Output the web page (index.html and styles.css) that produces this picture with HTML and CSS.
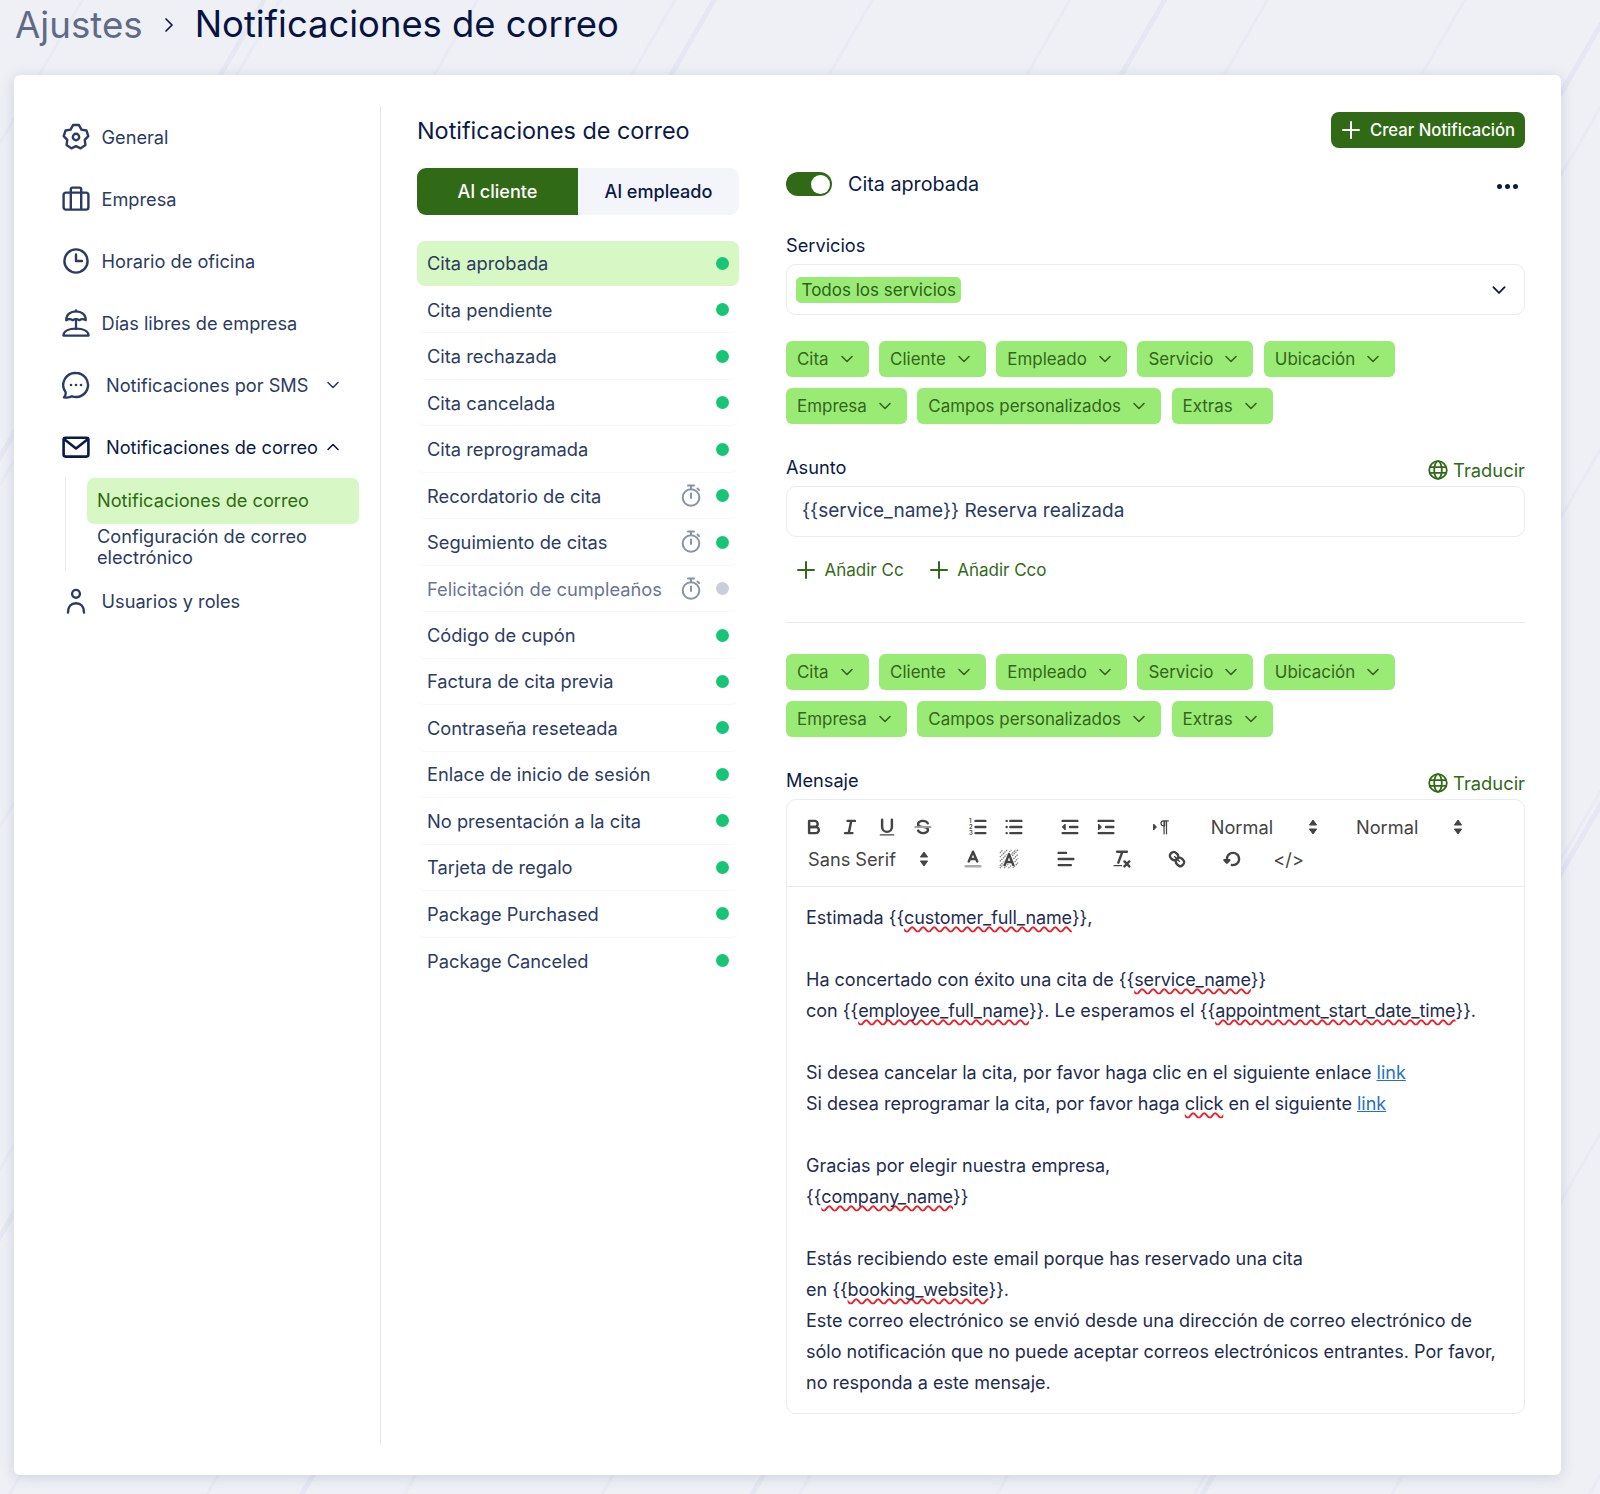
FILE: index.html
```html
<!DOCTYPE html>
<html lang="es">
<head>
<meta charset="utf-8">
<title>Notificaciones de correo</title>
<link rel="stylesheet" href="styles.css">
</head>
<body>
<svg class="defs" width="0" height="0" aria-hidden="true">
  <defs>
    <symbol id="chev" viewBox="0 0 16 16"><path d="M3 5.5l5 5 5-5" fill="none" stroke="currentColor" stroke-width="1.6" stroke-linecap="round" stroke-linejoin="round"/></symbol>
    <symbol id="plus" viewBox="0 0 18 18"><path d="M9 1v16M1 9h16" fill="none" stroke="currentColor" stroke-width="2" stroke-linecap="round"/></symbol>
    <symbol id="watch" viewBox="0 0 20 24"><g fill="none" stroke="currentColor" stroke-width="2" stroke-linecap="round"><circle cx="10" cy="13.5" r="8.3"/><path d="M10 9.5v4.5M7 1.5h6M10 1.5v3.5M16.5 4.5l1.6 1.6"/></g></symbol>
    <symbol id="globe" viewBox="0 0 20 20"><g fill="none" stroke="currentColor" stroke-width="1.8"><circle cx="10" cy="10" r="8.8"/><ellipse cx="10" cy="10" rx="3.8" ry="8.8"/><path d="M1.4 7.2h17.2M1.4 12.8h17.2"/></g></symbol>
    <symbol id="updown" viewBox="0 0 10 18"><path d="M5 2l3.6 5H1.400zM5 16l3.6-5H1.400z" fill="currentColor" stroke="currentColor" stroke-linejoin="round"/></symbol>
  </defs>
</svg>

<header class="crumbs">
  <span class="crumb-root">Ajustes</span>
  <svg class="crumb-sep" viewBox="0 0 10 16"><path d="M2 2l6 6-6 6" fill="none" stroke="currentColor" stroke-width="1.7" stroke-linecap="round" stroke-linejoin="round"/></svg>
  <h1 class="crumb-current">Notificaciones de correo</h1>
</header>

<main class="card">
  <nav class="side">
    <a class="nav-item">
      <svg class="nav-ico" viewBox="0 0 28 28"><g fill="none" stroke="currentColor" stroke-width="2.4" stroke-linejoin="round"><path d="M11.02 2.07L16.98 2.07L19.41 6.56L24.43 7.48L26.27 13.14L22.75 16.84L23.42 21.91L18.61 25.4L14 23.2L9.39 25.4L4.58 21.91L5.25 16.84L1.73 13.14L3.57 7.48L8.59 6.56Z"/><circle cx="14" cy="14" r="3.2"/></g></svg>
      <span>General</span>
    </a>
    <a class="nav-item">
      <svg class="nav-ico" viewBox="0 0 28 28"><g fill="none" stroke="currentColor" stroke-width="2.4" stroke-linejoin="round"><rect x="1.6" y="7.6" width="24.8" height="17" rx="2.4"/><path d="M8.8 7.6v17M19.2 7.6v17M8.8 7.6V4.2a1.6 1.6 0 0 1 1.6-1.6h7.2a1.6 1.6 0 0 1 1.6 1.6v3.4"/></g></svg>
      <span>Empresa</span>
    </a>
    <a class="nav-item">
      <svg class="nav-ico" viewBox="0 0 28 28"><g fill="none" stroke="currentColor" stroke-width="2.4" stroke-linecap="round" stroke-linejoin="round"><circle cx="14" cy="14" r="11.6"/><path d="M14 7.4V14h6"/></g></svg>
      <span>Horario de oficina</span>
    </a>
    <a class="nav-item">
      <svg class="nav-ico" viewBox="0 0 30 30"><g fill="none" stroke="currentColor" stroke-width="2.4" stroke-linecap="round" stroke-linejoin="round"><path d="M4.5 12c0-6 4.500-9.500 10.500-9.500S25.500 6 25.500 12c-2.300-1.500-4.700-1.500-7 0-2.300-1.500-4.700-1.500-7 0-2.300-1.500-4.700-1.500-7 0z"/><path d="M15 1.500v1M15 11.500v10"/><path d="M1.500 28.500c0-4.800 5.500-7.500 13.500-7.500s13.500 2.700 13.500 7.500z"/></g></svg>
      <span>Días libres de empresa</span>
    </a>
    <a class="nav-item nav-sub">
      <svg class="nav-ico" viewBox="0 0 28 28"><path d="M14 2a12 12 0 1 1-4 23.300C7.800 26.500 4.500 26.800 2 26.300c1.300-1.200 2-2.800 1.600-5.200A12 12 0 0 1 14 2z" fill="none" stroke="currentColor" stroke-width="2.4" stroke-linejoin="round"/><circle cx="9" cy="14" r="1.300" fill="currentColor"/><circle cx="14" cy="14" r="1.300" fill="currentColor"/><circle cx="19" cy="14" r="1.300" fill="currentColor"/></svg>
      <span class="nav-label">Notificaciones por SMS</span>
      <svg class="nav-chev"><use href="#chev"/></svg>
    </a>
    <a class="nav-item nav-sub nav-open">
      <svg class="nav-ico" viewBox="0 0 28 28"><g fill="none" stroke="currentColor" stroke-width="2.6" stroke-linejoin="round"><rect x="1.600" y="4.800" width="24.800" height="18.800" rx="2"/><path d="M2 6l12 9.500L26 6"/></g></svg>
      <span class="nav-label">Notificaciones de correo</span>
      <svg class="nav-chev nav-chev-up"><use href="#chev"/></svg>
    </a>
    <div class="subnav">
      <a class="sub-item sub-active">Notificaciones de correo</a>
      <a class="sub-item">Configuración de correo electrónico</a>
    </div>
    <a class="nav-item nav-last">
      <svg class="nav-ico" viewBox="0 0 28 28"><g fill="none" stroke="currentColor" stroke-width="2.4" stroke-linecap="round"><circle cx="14" cy="6.800" r="3.900"/><path d="M6 25.500c0-6 3.200-9.200 8-9.200s8 3.200 8 9.200"/></g></svg>
      <span>Usuarios y roles</span>
    </a>
  </nav>

  <section class="body">
    <div class="list-col">
      <h2 class="col-title">Notificaciones de correo</h2>
      <div class="tabs">
        <button class="tab tab-on">Al cliente</button>
        <button class="tab">Al empleado</button>
      </div>
      <ul class="list">
        <li class="row row-on"><span class="row-name">Cita aprobada</span><i class="dot"></i></li>
        <li class="row"><span class="row-name">Cita pendiente</span><i class="dot"></i></li>
        <li class="row"><span class="row-name">Cita rechazada</span><i class="dot"></i></li>
        <li class="row"><span class="row-name">Cita cancelada</span><i class="dot"></i></li>
        <li class="row"><span class="row-name">Cita reprogramada</span><i class="dot"></i></li>
        <li class="row"><span class="row-name">Recordatorio de cita</span><svg class="watch"><use href="#watch"/></svg><i class="dot"></i></li>
        <li class="row"><span class="row-name">Seguimiento de citas</span><svg class="watch"><use href="#watch"/></svg><i class="dot"></i></li>
        <li class="row row-off"><span class="row-name">Felicitación de cumpleaños</span><svg class="watch"><use href="#watch"/></svg><i class="dot dot-off"></i></li>
        <li class="row"><span class="row-name">Código de cupón</span><i class="dot"></i></li>
        <li class="row"><span class="row-name">Factura de cita previa</span><i class="dot"></i></li>
        <li class="row"><span class="row-name">Contraseña reseteada</span><i class="dot"></i></li>
        <li class="row"><span class="row-name">Enlace de inicio de sesión</span><i class="dot"></i></li>
        <li class="row"><span class="row-name">No presentación a la cita</span><i class="dot"></i></li>
        <li class="row"><span class="row-name">Tarjeta de regalo</span><i class="dot"></i></li>
        <li class="row"><span class="row-name">Package Purchased</span><i class="dot"></i></li>
        <li class="row row-end"><span class="row-name">Package Canceled</span><i class="dot"></i></li>
      </ul>
    </div>

    <div class="detail">
      <div class="detail-top">
        <button class="create"><svg class="create-plus"><use href="#plus"/></svg>Crear Notificación</button>
      </div>
      <div class="status">
        <span class="switch"><i class="knob"></i></span>
        <span class="status-name">Cita aprobada</span>
        <span class="more"><i></i><i></i><i></i></span>
      </div>

      <label class="field-label label-serv">Servicios</label>
      <div class="box select">
        <span class="tag">Todos los servicios</span>
        <svg class="select-chev"><use href="#chev"/></svg>
      </div>

      <div class="chips">
        <div class="chip-line">
          <span class="chip">Cita<svg><use href="#chev"/></svg></span>
          <span class="chip">Cliente<svg><use href="#chev"/></svg></span>
          <span class="chip">Empleado<svg><use href="#chev"/></svg></span>
          <span class="chip">Servicio<svg><use href="#chev"/></svg></span>
          <span class="chip">Ubicación<svg><use href="#chev"/></svg></span>
        </div>
        <div class="chip-line">
          <span class="chip">Empresa<svg><use href="#chev"/></svg></span>
          <span class="chip">Campos personalizados<svg><use href="#chev"/></svg></span>
          <span class="chip">Extras<svg><use href="#chev"/></svg></span>
        </div>
      </div>

      <div class="label-row label-asunto">
        <label class="field-label">Asunto</label>
        <a class="translate"><svg><use href="#globe"/></svg>Traducir</a>
      </div>
      <div class="box subject">{{service_name}} Reserva realizada</div>

      <div class="adds">
        <a class="add"><svg><use href="#plus"/></svg>Añadir Cc</a>
        <a class="add"><svg><use href="#plus"/></svg>Añadir Cco</a>
      </div>
      <hr class="rule">

      <div class="chips">
        <div class="chip-line">
          <span class="chip">Cita<svg><use href="#chev"/></svg></span>
          <span class="chip">Cliente<svg><use href="#chev"/></svg></span>
          <span class="chip">Empleado<svg><use href="#chev"/></svg></span>
          <span class="chip">Servicio<svg><use href="#chev"/></svg></span>
          <span class="chip">Ubicación<svg><use href="#chev"/></svg></span>
        </div>
        <div class="chip-line">
          <span class="chip">Empresa<svg><use href="#chev"/></svg></span>
          <span class="chip">Campos personalizados<svg><use href="#chev"/></svg></span>
          <span class="chip">Extras<svg><use href="#chev"/></svg></span>
        </div>
      </div>

      <div class="label-row label-msg">
        <label class="field-label">Mensaje</label>
        <a class="translate"><svg><use href="#globe"/></svg>Traducir</a>
      </div>
      <div class="editor">
        <div class="toolbar">
          <div class="tgroup">
            <button class="tb"><svg viewBox="0 0 18 18"><path class="s" d="M5,4H9.5A2.5,2.5,0,0,1,12,6.5v0A2.5,2.5,0,0,1,9.5,9H5V4Z"/><path class="s" d="M5,9h5.5A2.5,2.5,0,0,1,13,11.5v0A2.5,2.5,0,0,1,10.5,14H5V9Z"/></svg></button>
            <button class="tb"><svg viewBox="0 0 18 18"><path class="s" d="M7 4h6M5 14h6M8 14l2-10"/></svg></button>
            <button class="tb"><svg viewBox="0 0 18 18"><path class="s" d="M5,3V9a4,4,0,0,0,4,4h0a4,4,0,0,0,4-4V3"/><rect class="f" height="1" rx=".5" width="12" x="3" y="15"/></svg></button>
            <button class="tb"><svg viewBox="0 0 18 18"><path class="s t" d="M15.5,9H2.5"/><path class="f" d="M9.007,8C6.542,7.791,6,7.519,6,6.5,6,5.792,7.283,5,9,5c1.571,0,2.765.679,2.969,1.309a1,1,0,0,0,1.9-.617C13.356,4.106,11.354,3,9,3,6.2,3,4,4.538,4,6.5a3.2,3.2,0,0,0,.5,1.843Z"/><path class="f" d="M8.984,10C11.457,10.208,12,10.479,12,11.5c0,.708-1.283,1.5-3,1.5-1.571,0-2.765-.679-2.969-1.309a1,1,0,1,0-1.9.617C4.644,13.894,6.646,15,9,15c2.8,0,5-1.538,5-3.5a3.2,3.2,0,0,0-.5-1.843Z"/></svg></button>
          </div>
          <div class="tgroup">
            <button class="tb"><svg viewBox="0 0 18 18"><path class="s" d="M7 4h8M7 9h8M7 14h8"/><text class="num" x="1.7" y="5.700">1</text><text class="num" x="1.7" y="10.700">2</text><text class="num" x="1.7" y="15.700">3</text></svg></button>
            <button class="tb"><svg viewBox="0 0 18 18"><path class="s" d="M6 4h9M6 9h9M6 14h9M3 4h0M3 9h0M3 14h0"/></svg></button>
          </div>
          <div class="tgroup">
            <button class="tb"><svg viewBox="0 0 18 18"><path class="s" d="M3 14h12M3 4h12M9 9h6"/><path class="f s t" d="M5 7v4L3 9z"/></svg></button>
            <button class="tb"><svg viewBox="0 0 18 18"><path class="s" d="M3 14h12M3 4h12M9 9h6"/><path class="f s t" d="M3 7v4l2-2z"/></svg></button>
          </div>
          <div class="tgroup">
            <button class="tb"><svg viewBox="0 0 18 18"><path class="f s t" d="M3 11l2-2-2-2z"/><path class="s t" d="M15 4h-4a2 2 0 0 0 0 4h1V4"/><rect class="f" height="11" width="1" x="11" y="4"/><rect class="f" height="11" width="1" x="13" y="4"/></svg></button>
          </div>
          <div class="picker"><span>Normal</span><svg><use href="#updown"/></svg></div>
          <div class="picker"><span>Normal</span><svg><use href="#updown"/></svg></div>
          <div class="picker picker-font"><span>Sans Serif</span><svg><use href="#updown"/></svg></div>
          <div class="tgroup">
            <button class="tb"><svg viewBox="0 0 18 18"><path class="s" stroke-opacity=".45" d="M3 15h12"/><path class="s" d="M5.500 11L9 3l3.500 8M11.630 9H6.380"/></svg></button>
            <button class="tb"><svg viewBox="0 0 18 18"><path class="hatch" d="M1.500 4L4 1.500M1.500 7.500L7.500 1.500M1.500 11L11 1.500M1.500 14.500L14.500 1.500M1.500 16.500L16.500 1.500M5 16.500L16.500 5M8.500 16.500L16.500 8.500M12 16.500L16.500 12"/><path class="halo" d="M5.500 14L9 5l3.500 9M11.630 11.500H6.380"/><path class="s" d="M5.500 14L9 5l3.500 9M11.630 11.500H6.380"/></svg></button>
          </div>
          <div class="tgroup tg-nudge">
            <button class="tb"><svg viewBox="0 0 18 18"><path class="s" d="M3 9h12M3 14h10M3 4h6"/></svg></button>
          </div>
          <div class="tgroup tg-nudge">
            <button class="tb"><svg viewBox="0 0 18 18"><path class="s" d="M5 3h8M6 12l3.350-9M11 11l4 4M15 11l-4 4"/><rect class="f" height="1" rx=".5" width="7" x="2" y="14"/></svg></button>
          </div>
          <div class="tgroup">
            <button class="tb"><svg viewBox="0 0 18 18"><path class="s t" d="M7 7l4 4"/><path class="s" d="M8.9,4.577a3.476,3.476,0,0,1,.36,4.679A3.476,3.476,0,0,1,4.577,8.9C3.185,7.5,2.035,6.4,4.217,4.217S7.5,3.185,8.9,4.577Z"/><path class="s" d="M13.423,9.1a3.476,3.476,0,0,0-4.679-.36,3.476,3.476,0,0,0,.36,4.679c1.392,1.392,2.5,2.542,4.679.36S14.815,10.5,13.423,9.1Z"/></svg></button>
          </div>
          <div class="tgroup tg-nudge">
            <button class="tb"><svg viewBox="0 0 18 18"><path class="f s" d="M6 10l-2 2-2-2z"/><path class="s" d="M8.09,13.91A4.6,4.6,0,0,0,9,14,5,5,0,1,0,4,9"/></svg></button>
          </div>
          <div class="tgroup">
            <button class="tb tb-code">&lt;/&gt;</button>
          </div>
        </div>
        <div class="content">
          <p>Estimada {{<span class="sp">customer_full_name</span>}},</p>
          <p class="gap"></p>
          <p>Ha concertado con éxito una cita de {{<span class="sp">service_name</span>}}</p>
          <p>con {{<span class="sp">employee_full_name</span>}}. Le esperamos el {{<span class="sp">appointment_start_date_time</span>}}.</p>
          <p class="gap"></p>
          <p>Si desea cancelar la cita, por favor haga clic en el siguiente enlace <a class="lnk">link</a></p>
          <p>Si desea reprogramar la cita, por favor haga <span class="sp">click</span> en el siguiente <a class="lnk">link</a></p>
          <p class="gap"></p>
          <p>Gracias por elegir nuestra empresa,</p>
          <p>{{<span class="sp">company_name</span>}}</p>
          <p class="gap"></p>
          <p>Estás recibiendo este email porque has reservado una cita</p>
          <p>en {{<span class="sp">booking_website</span>}}.</p>
          <p>Este correo electrónico se envió desde una dirección de correo electrónico de sólo notificación que no puede aceptar correos electrónicos entrantes. Por favor, no responda a este mensaje.</p>
        </div>
      </div>
    </div>
  </section>
</main>
</body>
</html>
```
FILE: styles.css
```css
* { box-sizing: border-box; }
html, body { margin: 0; height: 100%; }
body {
  height: 1494px;
  overflow: hidden;
  font-family: Inter, "Liberation Sans", sans-serif;
  color: #0e1a45;
  background-color: #eef0f5;
  background-image:
    repeating-linear-gradient(120deg, transparent 0 226px, #e5e8f2 226px 231px, transparent 231px 390px),
    repeating-linear-gradient(120deg, transparent 0 70px, #e9ebf4 70px 73px, transparent 73px 171px);
}
.defs { position: absolute; }
a { color: inherit; text-decoration: none; }

.crumbs { height: 75px; padding: 0 0 0 15px; display: flex; align-items: flex-start; }
.crumb-root { font-size: 36.7px; line-height: 49px; color: #5f6b85; }
.crumb-sep { width: 10px; height: 16px; margin: 17px 21px 0 21px; color: #0e1a45; }
.crumb-current { margin: 0; font-size: 36.4px; line-height: 49px; font-weight: 400; color: #071442; }

.card {
  margin: 0 39px 0 14px;
  height: 1400px;
  background: #fff;
  border-radius: 6px;
  box-shadow: 0 2px 14px rgba(60, 70, 120, .18);
  display: flex;
  padding: 31px 36px 31px 0;
}

.side { width: 367px; flex: none; border-right: 1px solid #e3e5ee; padding: 0 21px 0 48px; }
.nav-item { display: flex; align-items: center; height: 62px; font-size: 18.2px; color: #2c3b62; }
.nav-ico { width: 28px; height: 28px; margin-right: 11.5px; flex: none; }
.nav-sub .nav-label { margin-left: 4.5px; flex: 1; white-space: nowrap; }
.nav-open { color: #0b1a45; }
.nav-chev { width: 16px; height: 16px; margin: 0 18px 0 0; flex: none; }
.nav-chev-up { transform: scaleY(-1); }
.subnav { margin: 0 0 0 3px; border-left: 1.5px solid #e7e9f0; padding-left: 21px; height: 92px; }
.sub-item { display: block; font-size: 18.2px; color: #2c3b62; padding: 0 10px; line-height: 20.5px; }
.sub-active { height: 46px; line-height: 45px; background: #d7f7c4; color: #2f6a14; border-radius: 7px; margin-bottom: 2px; }
.nav-last { height: 62px; }

.body { flex: 1; display: flex; padding-left: 36px; gap: 47px; min-width: 0; }
.list-col { width: 322px; flex: none; }
.col-title { margin: 9px 0 0; font-size: 23.4px; line-height: 32px; font-weight: 400; color: #0b1a45; white-space: nowrap; }
.tabs { display: flex; margin-top: 21px; height: 47px; border-radius: 9px; background: #f4f5fa; overflow: hidden; }
.tab { width: 50%; border: 0; background: transparent; font: 500 18.1px Inter, sans-serif; color: #0b1a45; padding: 0 0 2px; }
.tab-on { background: #316a17; color: #fff; }
.list { list-style: none; margin: 25.5px 0 0; padding: 0; }
.row { height: 46.47px; padding: 0 10px 0 10px; display: flex; align-items: center; font-size: 18.3px; color: #2c3b62; border-bottom: 1px solid #f6f7fa; border-radius: 8px; white-space: nowrap; }
.row-on { height: 45.5px; margin-bottom: 1px; background: #d7f7c4; border-bottom: 0; }
.row-off { color: #6b7590; }
.row-end { border-bottom: 0; }
.row-name { flex: 1; }
.watch { width: 20px; height: 24px; margin-right: 15px; color: #8a92a6; flex: none; }
.dot { width: 13px; height: 13px; border-radius: 50%; background: #17c576; flex: none; }
.dot-off { background: #cbced9; }

.detail { flex: 1; min-width: 0; }
.detail-top { display: flex; justify-content: flex-end; margin-top: 6px; height: 36px; }
.create { height: 36px; width: 194px; border: 0; border-radius: 8px; background: #316a17; color: #fff; font: 500 16.7px Inter, sans-serif; display: flex; align-items: center; padding: 0 0 0 11px; white-space: nowrap; }
.create-plus { width: 18px; height: 18px; margin-right: 10px; }
.status { display: flex; align-items: center; height: 24px; margin-top: 24px; }
.switch { width: 46px; height: 24px; border-radius: 12px; background: #316a17; position: relative; flex: none; }
.knob { position: absolute; right: 2.5px; top: 2.5px; width: 19px; height: 19px; border-radius: 50%; background: #fff; }
.status-name { margin-left: 16px; flex: 1; font-size: 19.75px; color: #0b1a45; }
.more { display: flex; gap: 3px; margin: 4px 7px 0 0; }
.more i { width: 5px; height: 5px; border-radius: 50%; background: #0b1a45; }
.field-label { font-size: 18.2px; color: #0b1a45; }
.label-serv { display: block; margin-top: 38px; line-height: 22px; }
.box { border: 1.5px solid #e9ebf2; border-radius: 10px; }
.select { margin-top: 8px; height: 51px; display: flex; align-items: center; justify-content: space-between; padding: 0 16px 0 9px; }
.tag { background: #9aeb76; color: #2f5e16; border-radius: 5px; font-size: 17px; line-height: 26px; padding: 0 5.5px; }
.select-chev { width: 18px; height: 18px; color: #0b1a45; }
.chips { display: flex; flex-direction: column; gap: 11px; margin-top: 26px; }
.chip-line { display: flex; gap: 10.5px; }
.chip { height: 36px; display: inline-flex; align-items: center; background: #9aeb76; color: #33651a; border-radius: 6px; font-size: 16.95px; padding: 0 14px 1px 11px; white-space: nowrap; }
.chip svg { width: 16px; height: 16px; margin-left: 10px; }
.label-row { display: flex; justify-content: space-between; align-items: flex-end; }
.label-row .field-label { line-height: 22px; margin-bottom: 8px; }
.label-asunto { margin-top: 32px; }
.label-msg { margin-top: 32px; }
.translate { display: flex; align-items: center; color: #316a17; font-size: 18.35px; line-height: 22px; margin-bottom: 5px; }
.translate svg { width: 20px; height: 20px; margin-right: 5.5px; }
.subject { height: 51px; line-height: 48px; padding: 0 15px; font-size: 19.05px; color: #2c3b62; }
.adds { display: flex; gap: 26px; margin-top: 21px; padding-left: 11px; height: 24px; }
.add { display: flex; align-items: center; color: #316a17; font-size: 17px; }
.add svg { width: 18px; height: 18px; margin-right: 9.5px; }
.rule { border: 0; border-top: 1.5px solid #e9ebf2; margin: 40px 0 0; }
.rule + .chips { margin-top: 31px; }

.editor { border: 1.5px solid #e9ebf2; border-radius: 10px; height: 615px; }
.toolbar { display: flex; flex-wrap: wrap; align-items: center; padding: 11px 9px 9px; height: 86.5px; border-bottom: 1.5px solid #e9ebf2; column-gap: 19px; row-gap: 0; align-content: flex-start; }
.tgroup { display: flex; }
.tg-nudge { margin-left: 1px; }
.tb { width: 36.25px; height: 32px; padding: 4px 7px; border: 0; background: none; display: block; color: #444; }
.tb svg { width: 22px; height: 22px; display: block; overflow: visible; }
.s { fill: none; stroke: #444; stroke-width: 2; stroke-linecap: round; stroke-linejoin: round; }
.t { stroke-width: 1; }
.f { fill: #444; }
.num { font: 600 4.8px Inter, sans-serif; fill: #444; }
.hatch { fill: none; stroke: #777; stroke-width: 1; stroke-dasharray: 1.2 .6; }
.halo { fill: none; stroke: #fff; stroke-width: 3.4; stroke-linejoin: round; }
.tb-code { font: 400 18.2px Inter, sans-serif; padding: 0; color: #444; }
.picker { width: 126.25px; height: 32px; display: flex; align-items: center; justify-content: space-between; padding: 0 7px 0 12.5px; font-size: 18.2px; color: #444; }
.picker svg { width: 10px; height: 18px; color: #444; flex: none; }
.picker-font { width: 145px; margin-right: -5px; padding-left: 12px; padding-right: 12px; }
.content { padding: 15px 19px 0; font-size: 18.02px; line-height: 31px; color: #1f2c50; }
.content p { margin: 0; }
.gap { height: 31px; }
.sp { letter-spacing: -.13px; text-decoration: underline wavy #e8202a 1.5px; text-underline-offset: 2px; text-decoration-skip-ink: none; }
.lnk { color: #2470c4; text-decoration: underline; }
```
